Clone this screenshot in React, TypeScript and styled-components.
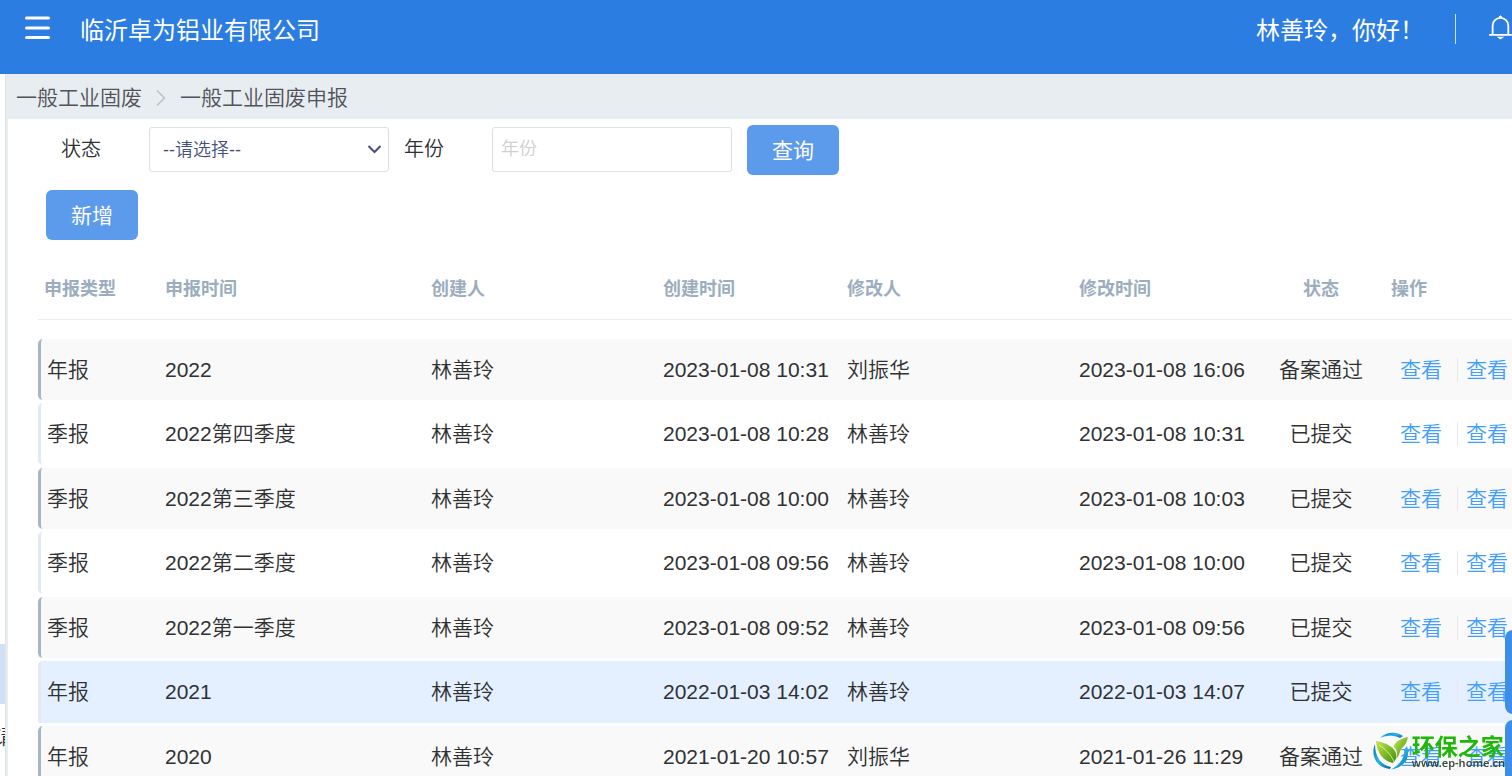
import React from "react";
import styled, { createGlobalStyle } from "styled-components";

const GlobalStyle = createGlobalStyle`
  *, *::before, *::after { box-sizing: border-box; }
  body {
    margin: 0;
    background: #fff;
    color: #303133;
    font-family: "Liberation Sans", "Noto Sans CJK SC", sans-serif;
    font-size: 21px;
    overflow: hidden;
  }
  button, input, select { font-family: inherit; }
`;

const Page = styled.div`
  display: flex;
  flex-direction: column;
  height: 100vh;
  overflow: hidden;
`;

const Header = styled.header`
  display: flex;
  flex: none;
  align-items: flex-start;
  height: 74px;
  padding: 14px 0 0 24px;
  overflow: hidden;
  background: #2b7de1;
  color: #fff;
  font-size: 24px;
  line-height: 34px;
`;

const IconButton = styled.button`
  display: flex;
  flex: none;
  padding: 0;
  border: 0;
  background: none;
  color: inherit;
`;

const Company = styled.h1`
  margin: 0 auto 0 29px;
  font-size: 24px;
  font-weight: 400;
  white-space: nowrap;
`;

const Greeting = styled.span`
  padding-right: 31px;
  white-space: nowrap;
`;

const HeaderRule = styled.span`
  flex: none;
  width: 1px;
  height: 30px;
  margin-right: 32px;
  background: #cfe1f8;
`;

const BellButton = styled(IconButton)`
  width: 24px;
`;

const Body = styled.div`
  display: flex;
  flex: 1;
  min-height: 0;
`;

const Sidebar = styled.nav`
  display: flex;
  flex: none;
  flex-direction: column;
  align-items: flex-end;
  width: 6px;
  padding-top: 570px;
  border-right: 1px solid #dfe4ea;
  overflow: hidden;
`;

const SideItem = styled.a<{ $active?: boolean }>`
  flex: none;
  width: 240px;
  height: 60px;
  margin-right: -10px;
  background: ${(p) => (p.$active ? "#cfe0f7" : "transparent")};
  color: #303133;
  font-weight: 350;
  line-height: 66px;
  text-align: right;
  text-decoration: none;
`;

const Main = styled.main`
  flex: 1;
  min-width: 0;
  border-left: 2px solid #e8edf1;
  overflow: hidden;
`;

const Breadcrumb = styled.nav`
  display: flex;
  align-items: center;
  gap: 14px;
  height: 45px;
  padding: 2px 8px 0;
  background: #e8edf1;
  font-weight: 350;
`;

const Crumb = styled.a`
  color: #505358;
  line-height: 30px;
  text-decoration: none;
`;

const Filters = styled.form`
  display: flex;
  align-items: center;
  height: 62px;
  padding-left: 53px;
  font-size: 20px;
  font-weight: 350;
`;

const FieldLabel = styled.label`
  width: 88px;
  padding-bottom: 2px;
  line-height: 30px;
`;

const Control = styled.div`
  display: flex;
  position: relative;
  width: 240px;
  margin-right: 15px;
  padding-bottom: 1px;

  svg {
    position: absolute;
    top: 17px;
    right: 7px;
    pointer-events: none;
  }
`;

const Select = styled.select`
  appearance: none;
  width: 100%;
  height: 45px;
  padding: 0 13px;
  border: 1px solid #dcdfe9;
  border-radius: 3px;
  background: #fff;
  color: #44517c;
  font-size: 18px;
  font-weight: 350;
`;

const TextInput = styled.input`
  width: 100%;
  height: 45px;
  padding: 0 8px;
  border: 1px solid #dcdfe9;
  border-radius: 3px;
  font-size: 18px;
  font-weight: 350;

  &::placeholder { color: #cfcfcf; opacity: 1; }
`;

const PrimaryButton = styled.button`
  flex: none;
  width: 92px;
  height: 50px;
  padding: 0 0 2px;
  border: 0;
  border-radius: 6px;
  background: #5c9aec;
  color: #fff;
  font-size: 21px;
  font-weight: 400;
`;

const Actions = styled.div`
  display: flex;
  padding: 9px 0 0 38px;
`;

const Table = styled.table`
  table-layout: fixed;
  width: 1640px;
  margin: 20px 0 0 30px;
  border-collapse: separate;
  border-spacing: 0;
`;

const HeadCell = styled.th<{ $align?: string; $pad?: number }>`
  height: 60px;
  padding: 0 0 2px ${(p) => p.$pad ?? 9}px;
  border-bottom: 1px solid #ebeced;
  color: #9cadbf;
  font-size: 18px;
  font-weight: 700;
  line-height: 24px;
  text-align: ${(p) => p.$align ?? "left"};
`;

const SpacerCell = styled.td`
  height: 19px;
  padding: 0;
`;

const Cell = styled.td<{ $align?: string; $pad?: number }>`
  padding: 0 0 0 ${(p) => p.$pad ?? 9}px;
  border-bottom: 3px solid #fff;
  background-clip: padding-box;
  line-height: 24px;
  text-align: ${(p) => p.$align ?? "left"};
  white-space: nowrap;
`;

const TypeMark = styled.div<{ $strong: boolean }>`
  display: flex;
  align-items: center;
  height: 100%;
  padding-left: 6px;
  border-left: 3px solid ${(p) => (p.$strong ? "#a5b7c7" : "#e3e9f0")};
  border-radius: 5px 0 0 5px;
`;

const Row = styled.tr<{ $striped: boolean; $hovered?: boolean }>`
  height: ${(p) => (p.$striped ? 64 : 65)}px;
  font-weight: 350;

  ${Cell} {
    height: ${(p) => (p.$striped ? 64 : 65)}px;
    background-color: ${(p) => (p.$hovered ? "#e4f0ff" : p.$striped ? "#f9f9f9" : "#fff")};
  }
  ${Cell}:first-child { border-top-left-radius: 5px; }
`;

const Links = styled.div`
  display: flex;
  align-items: center;
`;

const RowLink = styled.a`
  color: #409eff;
  text-decoration: none;

  & + & {
    margin-left: 15px;
    padding-left: 8px;
    border-left: 1px solid #e6e8eb;
  }
`;

const Watermark = styled.div`
  display: flex;
  position: fixed;
  right: 7px;
  bottom: 6px;
  gap: 3px;
  align-items: center;
  pointer-events: none;
`;

const WatermarkText = styled.div`
  display: flex;
  flex-direction: column;
  color: #1fb80a;
  font-family: "Noto Sans CJK SC", sans-serif;
  font-size: 23px;
  font-weight: 700;
  line-height: 24px;
`;

const WatermarkUrl = styled.span`
  color: #3c4a3c;
  font-family: "Noto Sans", sans-serif;
  font-size: 11px;
  font-weight: 600;
  line-height: 12px;
`;

const SideTabs = styled.aside`
  display: flex;
  position: fixed;
  top: 630px;
  right: 0;
  flex-direction: column;
  gap: 6px;
  width: 7px;
  overflow: hidden;
`;

const SideTab = styled.button`
  flex: none;
  width: 40px;
  height: 84px;
  padding: 0;
  border: 0;
  border-radius: 8px;
  background: #3d8ee8;
`;

interface Declaration {
  type: string;
  period: string;
  creator: string;
  created: string;
  editor: string;
  edited: string;
  status: string;
  hovered?: boolean;
}

const declarations: Declaration[] = [
  { type: "年报", period: "2022", creator: "林善玲", created: "2023-01-08 10:31", editor: "刘振华", edited: "2023-01-08 16:06", status: "备案通过" },
  { type: "季报", period: "2022第四季度", creator: "林善玲", created: "2023-01-08 10:28", editor: "林善玲", edited: "2023-01-08 10:31", status: "已提交" },
  { type: "季报", period: "2022第三季度", creator: "林善玲", created: "2023-01-08 10:00", editor: "林善玲", edited: "2023-01-08 10:03", status: "已提交" },
  { type: "季报", period: "2022第二季度", creator: "林善玲", created: "2023-01-08 09:56", editor: "林善玲", edited: "2023-01-08 10:00", status: "已提交" },
  { type: "季报", period: "2022第一季度", creator: "林善玲", created: "2023-01-08 09:52", editor: "林善玲", edited: "2023-01-08 09:56", status: "已提交" },
  { type: "年报", period: "2021", creator: "林善玲", created: "2022-01-03 14:02", editor: "林善玲", edited: "2022-01-03 14:07", status: "已提交", hovered: true },
  { type: "年报", period: "2020", creator: "林善玲", created: "2021-01-20 10:57", editor: "刘振华", edited: "2021-01-26 11:29", status: "备案通过" },
];

const columnWidths = [118, 266, 232, 184, 232, 190, 122];

function MenuIcon() {
  return (
    <svg width="27" height="27" viewBox="0 0 27 27" fill="none" stroke="currentColor" strokeWidth="3" strokeLinecap="round" aria-hidden="true">
      <path d="M2.5 4H24.500M2.500 14H24.500M2.500 23.500H24.500" />
    </svg>
  );
}

function BellIcon() {
  return (
    <svg width="26" height="28" viewBox="0 0 26 28" fill="none" stroke="currentColor" strokeWidth="2" strokeLinecap="round" aria-hidden="true">
      <path d="M2 21.500H25M5 21V11.500a8.500 8.500 0 0 1 17 0V21" />
      <path d="M12.500 2.500L13.500 1.500l1 1M12.500 24.500h2L13.500 25.200z" />
    </svg>
  );
}

function WatermarkLogo() {
  return (
    <svg width="37" height="38" viewBox="0 0 37 38" aria-hidden="true">
      <defs>
        <linearGradient id="ring" x1="0" y1="0" x2="1" y2="1">
          <stop offset="0" stopColor="#0c6fb8" />
          <stop offset="0.500" stopColor="#27b5e8" />
          <stop offset="1" stopColor="#0b5fa5" />
        </linearGradient>
        <linearGradient id="leaf" x1="0" y1="0" x2="1" y2="1">
          <stop offset="0" stopColor="#c4e64a" />
          <stop offset="1" stopColor="#3f8f0c" />
        </linearGradient>
      </defs>
      <path d="M8 6C14 0 24-1 31 4L28 6C22 3 15 3 8 6Z" fill="url(#ring)" />
      <path d="M3 12C-2 24 5 36 18 37L19 35C9 33 3 25 3 12Z" fill="url(#ring)" />
      <path d="M35 14C39 25 32 36 19 37.500C28 33 33 25 32 18Z" fill="url(#ring)" />
      <path d="M4 9C14 11 21 14 24 21C25 25 24 28 21 31C11 29 5 21 4 9Z" fill="url(#leaf)" />
      <path d="M36 5C27 7 22 11 22 15C25 18 26 22 24 27C29 22 27 18 31 15C34 12 35 9 36 5Z" fill="url(#leaf)" />
      <path d="M7 13C13 17 19 22 22 30" stroke="#eaf6b8" strokeWidth="0.800" fill="none" />
    </svg>
  );
}

export default function App() {
  return (
    <Page>
      <GlobalStyle />
      <Header>
        <IconButton type="button" aria-label="菜单">
          <MenuIcon />
        </IconButton>
        <Company>临沂卓为铝业有限公司</Company>
        <Greeting>林善玲，你好！</Greeting>
        <HeaderRule />
        <BellButton type="button" aria-label="通知">
          <BellIcon />
        </BellButton>
      </Header>
      <Body>
        <Sidebar>
          <SideItem href="#" $active aria-label="一般工业固废申报" />
          <SideItem href="#">请</SideItem>
        </Sidebar>
        <Main>
          <Breadcrumb>
            <Crumb href="#">一般工业固废</Crumb>
            <svg width="10" height="18" viewBox="0 0 10 18" fill="none" stroke="#bcc1c9" strokeWidth="1.500" aria-hidden="true">
              <path d="M1 1.500L8.500 9L1 16.500" />
            </svg>
            <Crumb href="#">一般工业固废申报</Crumb>
          </Breadcrumb>
          <Filters>
            <FieldLabel htmlFor="status">状态</FieldLabel>
            <Control>
              <Select id="status" defaultValue="">
                <option value="">--请选择--</option>
                <option value="submitted">已提交</option>
                <option value="approved">备案通过</option>
              </Select>
              <svg width="15" height="10" viewBox="0 0 15 10" fill="none" stroke="#44517c" strokeWidth="2" aria-hidden="true">
                <path d="M1.500 2L7.500 8L13.500 2" />
              </svg>
            </Control>
            <FieldLabel htmlFor="year">年份</FieldLabel>
            <Control>
              <TextInput id="year" placeholder="年份" />
            </Control>
            <PrimaryButton type="button">查询</PrimaryButton>
          </Filters>
          <Actions>
            <PrimaryButton type="button">新增</PrimaryButton>
          </Actions>
          <Table>
            <colgroup>
              {columnWidths.map((width, i) => (
                <col key={i} width={width} />
              ))}
              <col />
            </colgroup>
            <thead>
              <tr>
                <HeadCell $pad={6}>申报类型</HeadCell>
                <HeadCell>申报时间</HeadCell>
                <HeadCell>创建人</HeadCell>
                <HeadCell>创建时间</HeadCell>
                <HeadCell>修改人</HeadCell>
                <HeadCell>修改时间</HeadCell>
                <HeadCell $align="center" $pad={0}>状态</HeadCell>
                <HeadCell>操作</HeadCell>
              </tr>
            </thead>
            <tbody>
              <tr>
                <SpacerCell colSpan={8} />
              </tr>
              {declarations.map((d, i) => (
                <Row key={d.created} $striped={i % 2 === 0} $hovered={d.hovered}>
                  <Cell $pad={0}>
                    <TypeMark $strong={i % 2 === 0}>{d.type}</TypeMark>
                  </Cell>
                  <Cell>{d.period}</Cell>
                  <Cell>{d.creator}</Cell>
                  <Cell>{d.created}</Cell>
                  <Cell>{d.editor}</Cell>
                  <Cell>{d.edited}</Cell>
                  <Cell $align="center" $pad={0}>{d.status}</Cell>
                  <Cell $pad={18}>
                    <Links>
                      <RowLink href="#">查看</RowLink>
                      <RowLink href="#">查看</RowLink>
                    </Links>
                  </Cell>
                </Row>
              ))}
            </tbody>
          </Table>
        </Main>
      </Body>
      <Watermark>
        <WatermarkLogo />
        <WatermarkText>
          环保之家
          <WatermarkUrl>www.ep-home.cn</WatermarkUrl>
        </WatermarkText>
      </Watermark>
      <SideTabs>
        <SideTab type="button" aria-label="客服" />
        <SideTab type="button" aria-label="反馈" />
      </SideTabs>
    </Page>
  );
}
